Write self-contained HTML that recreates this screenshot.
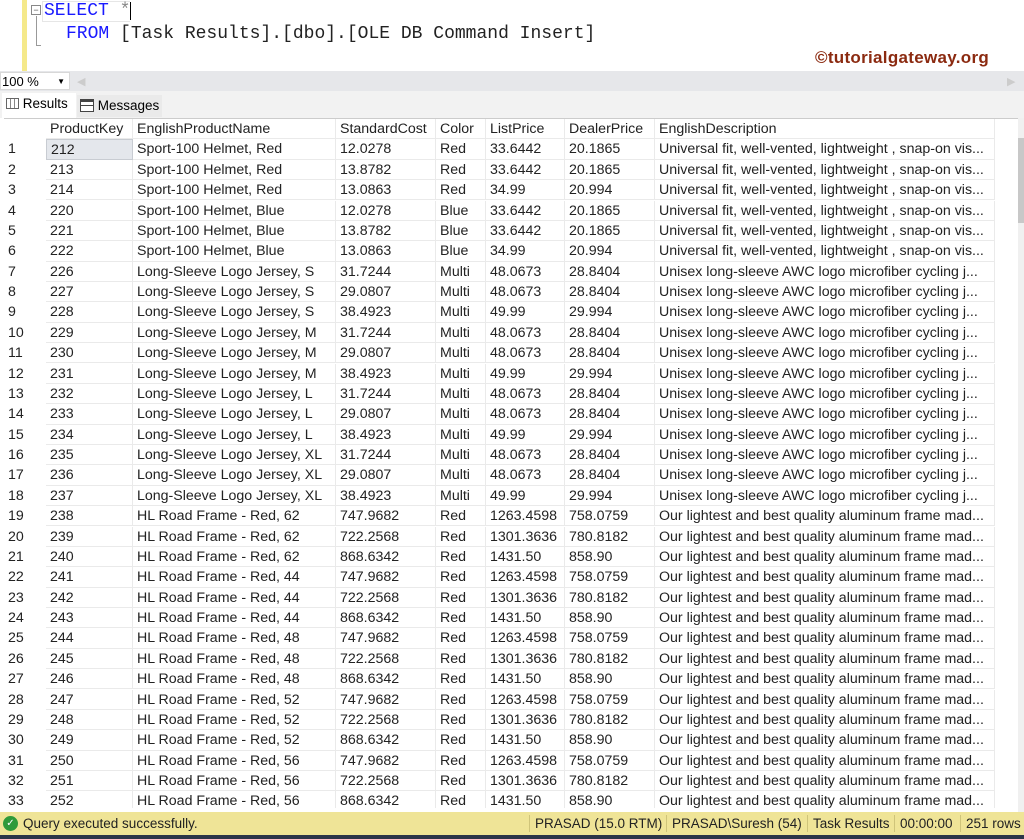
<!DOCTYPE html>
<html><head><meta charset="utf-8"><style>
*{margin:0;padding:0;box-sizing:border-box}
body{width:1024px;height:839px;overflow:hidden;background:#fff;font-family:"Liberation Sans",sans-serif;position:relative}
.ed{position:absolute;left:0;top:0;width:1024px;height:72px;background:#fff}
.ybar{position:absolute;left:22px;top:0;width:5px;height:72px;background:#f5e98a}
.code{position:absolute;font-family:"Liberation Mono",monospace;font-size:18px;color:#222;white-space:pre}
.kw{color:#1a1aff}
.zb{position:absolute;left:0;top:71px;width:1024px;height:20px;background:#e6e7ea}
.zoom{position:absolute;left:0;top:72px;width:70px;height:18px;background:#fff;border:1px solid #d8d8d8;font-size:13px;padding-left:1px;line-height:17px}
.tabs{position:absolute;left:0;top:91px;width:1024px;height:27px;background:#f2f2f2}
.tab{position:absolute;font-size:13.5px}
.grid{position:absolute;left:4px;top:118px;width:1014px;height:690px;background:#fff;overflow:hidden;border-top:1px solid #ccc}
.r{position:absolute;left:0;height:20.4px;width:1000px;font-size:14.2px;color:#222;line-height:20px}
.r span{position:absolute;top:0;height:100%;border-right:1px solid #eaeaea;border-bottom:1px solid #eaeaea;padding-left:4px;white-space:nowrap;overflow:hidden}
.r span.n{border:none;padding-left:4px}
.sb{position:absolute;left:1018px;top:118px;width:6px;height:694px;background:#f0f0f0}
.st{position:absolute;left:0;top:812px;width:1024px;height:23px;background:#efe497;font-size:13.5px;line-height:23px;color:#222}
.st i{position:absolute;top:3px;height:17px;border-left:1px solid #cfc47a;font-style:normal;padding-left:5px;line-height:17px}
.bot{position:absolute;left:0;top:835px;width:1024px;height:4px;background:#2b3548}
</style></head><body>
<div class="ed">
<div class="ybar"></div>
<div style="position:absolute;left:31px;top:5px;width:10px;height:10px;border:1px solid #888;font-size:9px;line-height:8px;text-align:center;color:#555">−</div>
<div style="position:absolute;left:36px;top:16px;width:5px;height:30px;border-left:1px solid #999;border-bottom:1px solid #999"></div>
<div style="position:absolute;left:42px;top:1px;width:88px;height:21px;border:1px solid #e6e6e6;border-right:none"></div>
<div style="position:absolute;left:130px;top:2px;width:1px;height:18px;background:#000"></div>
<div class="code" style="left:44px;top:1px"><span class="kw">SELECT</span> <span style="color:#888">*</span></div>
<div class="code" style="left:66px;top:24px"><span class="kw">FROM</span> [Task Results].[dbo].[OLE DB Command Insert]</div>
<div style="position:absolute;left:815px;top:48px;font-size:17px;letter-spacing:0.3px;font-weight:bold;color:#8b2a10">©tutorialgateway.org</div>
</div>
<div class="zb"></div>
<div class="zoom">100 %<span style="position:absolute;right:4px;top:0;font-size:8px">▼</span></div>
<div style="position:absolute;left:77px;top:75px;color:#ccc;font-size:11px">◀</div>
<div style="position:absolute;left:1007px;top:75px;color:#ccc;font-size:11px">▶</div>
<div class="tabs">
<div style="position:absolute;left:2px;top:2px;width:74px;height:25px;background:#fff"></div>
<div class="tab" style="left:6px;top:5px"><span style="display:inline-block;width:13px;height:11px;border:1px solid #666;background:repeating-linear-gradient(90deg,#fff 0 3px,#888 3px 4px);vertical-align:-1px"></span> Results</div>
<div style="position:absolute;left:77px;top:4px;width:85px;height:22px;background:#eaeaea"></div>
<div class="tab" style="left:80px;top:7px"><span style="display:inline-block;width:14px;height:13px;border:1px solid #444;vertical-align:-2px;background:linear-gradient(#444 0 2px,#fff 2px 5px,#444 5px 6px,#fff 6px)"></span> Messages</div>
</div>
<div class="grid">
<div class="r" style="top:0"><span class="n" style="left:0;width:42px"></span><span style="left:42px;width:87px">ProductKey</span><span style="left:129px;width:203px">EnglishProductName</span><span style="left:332px;width:100px">StandardCost</span><span style="left:432px;width:50px">Color</span><span style="left:482px;width:79px">ListPrice</span><span style="left:561px;width:90px">DealerPrice</span><span style="left:651px;width:340px">EnglishDescription</span></div>
<div class="r" style="top:20.4px"><span class="n" style="left:0;width:42px">1</span><span style="left:42px;width:87px;background:#e4e7ec;border:1px solid #c8ccd2">212</span><span style="left:129px;width:203px">Sport-100 Helmet, Red</span><span style="left:332px;width:100px">12.0278</span><span style="left:432px;width:50px">Red</span><span style="left:482px;width:79px">33.6442</span><span style="left:561px;width:90px">20.1865</span><span style="left:651px;width:340px">Universal fit, well-vented, lightweight , snap-on vis...</span></div>
<div class="r" style="top:40.8px"><span class="n" style="left:0;width:42px">2</span><span style="left:42px;width:87px">213</span><span style="left:129px;width:203px">Sport-100 Helmet, Red</span><span style="left:332px;width:100px">13.8782</span><span style="left:432px;width:50px">Red</span><span style="left:482px;width:79px">33.6442</span><span style="left:561px;width:90px">20.1865</span><span style="left:651px;width:340px">Universal fit, well-vented, lightweight , snap-on vis...</span></div>
<div class="r" style="top:61.1px"><span class="n" style="left:0;width:42px">3</span><span style="left:42px;width:87px">214</span><span style="left:129px;width:203px">Sport-100 Helmet, Red</span><span style="left:332px;width:100px">13.0863</span><span style="left:432px;width:50px">Red</span><span style="left:482px;width:79px">34.99</span><span style="left:561px;width:90px">20.994</span><span style="left:651px;width:340px">Universal fit, well-vented, lightweight , snap-on vis...</span></div>
<div class="r" style="top:81.5px"><span class="n" style="left:0;width:42px">4</span><span style="left:42px;width:87px">220</span><span style="left:129px;width:203px">Sport-100 Helmet, Blue</span><span style="left:332px;width:100px">12.0278</span><span style="left:432px;width:50px">Blue</span><span style="left:482px;width:79px">33.6442</span><span style="left:561px;width:90px">20.1865</span><span style="left:651px;width:340px">Universal fit, well-vented, lightweight , snap-on vis...</span></div>
<div class="r" style="top:101.9px"><span class="n" style="left:0;width:42px">5</span><span style="left:42px;width:87px">221</span><span style="left:129px;width:203px">Sport-100 Helmet, Blue</span><span style="left:332px;width:100px">13.8782</span><span style="left:432px;width:50px">Blue</span><span style="left:482px;width:79px">33.6442</span><span style="left:561px;width:90px">20.1865</span><span style="left:651px;width:340px">Universal fit, well-vented, lightweight , snap-on vis...</span></div>
<div class="r" style="top:122.3px"><span class="n" style="left:0;width:42px">6</span><span style="left:42px;width:87px">222</span><span style="left:129px;width:203px">Sport-100 Helmet, Blue</span><span style="left:332px;width:100px">13.0863</span><span style="left:432px;width:50px">Blue</span><span style="left:482px;width:79px">34.99</span><span style="left:561px;width:90px">20.994</span><span style="left:651px;width:340px">Universal fit, well-vented, lightweight , snap-on vis...</span></div>
<div class="r" style="top:142.6px"><span class="n" style="left:0;width:42px">7</span><span style="left:42px;width:87px">226</span><span style="left:129px;width:203px">Long-Sleeve Logo Jersey, S</span><span style="left:332px;width:100px">31.7244</span><span style="left:432px;width:50px">Multi</span><span style="left:482px;width:79px">48.0673</span><span style="left:561px;width:90px">28.8404</span><span style="left:651px;width:340px">Unisex long-sleeve AWC logo microfiber cycling j...</span></div>
<div class="r" style="top:163px"><span class="n" style="left:0;width:42px">8</span><span style="left:42px;width:87px">227</span><span style="left:129px;width:203px">Long-Sleeve Logo Jersey, S</span><span style="left:332px;width:100px">29.0807</span><span style="left:432px;width:50px">Multi</span><span style="left:482px;width:79px">48.0673</span><span style="left:561px;width:90px">28.8404</span><span style="left:651px;width:340px">Unisex long-sleeve AWC logo microfiber cycling j...</span></div>
<div class="r" style="top:183.4px"><span class="n" style="left:0;width:42px">9</span><span style="left:42px;width:87px">228</span><span style="left:129px;width:203px">Long-Sleeve Logo Jersey, S</span><span style="left:332px;width:100px">38.4923</span><span style="left:432px;width:50px">Multi</span><span style="left:482px;width:79px">49.99</span><span style="left:561px;width:90px">29.994</span><span style="left:651px;width:340px">Unisex long-sleeve AWC logo microfiber cycling j...</span></div>
<div class="r" style="top:203.8px"><span class="n" style="left:0;width:42px">10</span><span style="left:42px;width:87px">229</span><span style="left:129px;width:203px">Long-Sleeve Logo Jersey, M</span><span style="left:332px;width:100px">31.7244</span><span style="left:432px;width:50px">Multi</span><span style="left:482px;width:79px">48.0673</span><span style="left:561px;width:90px">28.8404</span><span style="left:651px;width:340px">Unisex long-sleeve AWC logo microfiber cycling j...</span></div>
<div class="r" style="top:224.1px"><span class="n" style="left:0;width:42px">11</span><span style="left:42px;width:87px">230</span><span style="left:129px;width:203px">Long-Sleeve Logo Jersey, M</span><span style="left:332px;width:100px">29.0807</span><span style="left:432px;width:50px">Multi</span><span style="left:482px;width:79px">48.0673</span><span style="left:561px;width:90px">28.8404</span><span style="left:651px;width:340px">Unisex long-sleeve AWC logo microfiber cycling j...</span></div>
<div class="r" style="top:244.5px"><span class="n" style="left:0;width:42px">12</span><span style="left:42px;width:87px">231</span><span style="left:129px;width:203px">Long-Sleeve Logo Jersey, M</span><span style="left:332px;width:100px">38.4923</span><span style="left:432px;width:50px">Multi</span><span style="left:482px;width:79px">49.99</span><span style="left:561px;width:90px">29.994</span><span style="left:651px;width:340px">Unisex long-sleeve AWC logo microfiber cycling j...</span></div>
<div class="r" style="top:264.9px"><span class="n" style="left:0;width:42px">13</span><span style="left:42px;width:87px">232</span><span style="left:129px;width:203px">Long-Sleeve Logo Jersey, L</span><span style="left:332px;width:100px">31.7244</span><span style="left:432px;width:50px">Multi</span><span style="left:482px;width:79px">48.0673</span><span style="left:561px;width:90px">28.8404</span><span style="left:651px;width:340px">Unisex long-sleeve AWC logo microfiber cycling j...</span></div>
<div class="r" style="top:285.3px"><span class="n" style="left:0;width:42px">14</span><span style="left:42px;width:87px">233</span><span style="left:129px;width:203px">Long-Sleeve Logo Jersey, L</span><span style="left:332px;width:100px">29.0807</span><span style="left:432px;width:50px">Multi</span><span style="left:482px;width:79px">48.0673</span><span style="left:561px;width:90px">28.8404</span><span style="left:651px;width:340px">Unisex long-sleeve AWC logo microfiber cycling j...</span></div>
<div class="r" style="top:305.6px"><span class="n" style="left:0;width:42px">15</span><span style="left:42px;width:87px">234</span><span style="left:129px;width:203px">Long-Sleeve Logo Jersey, L</span><span style="left:332px;width:100px">38.4923</span><span style="left:432px;width:50px">Multi</span><span style="left:482px;width:79px">49.99</span><span style="left:561px;width:90px">29.994</span><span style="left:651px;width:340px">Unisex long-sleeve AWC logo microfiber cycling j...</span></div>
<div class="r" style="top:326px"><span class="n" style="left:0;width:42px">16</span><span style="left:42px;width:87px">235</span><span style="left:129px;width:203px">Long-Sleeve Logo Jersey, XL</span><span style="left:332px;width:100px">31.7244</span><span style="left:432px;width:50px">Multi</span><span style="left:482px;width:79px">48.0673</span><span style="left:561px;width:90px">28.8404</span><span style="left:651px;width:340px">Unisex long-sleeve AWC logo microfiber cycling j...</span></div>
<div class="r" style="top:346.4px"><span class="n" style="left:0;width:42px">17</span><span style="left:42px;width:87px">236</span><span style="left:129px;width:203px">Long-Sleeve Logo Jersey, XL</span><span style="left:332px;width:100px">29.0807</span><span style="left:432px;width:50px">Multi</span><span style="left:482px;width:79px">48.0673</span><span style="left:561px;width:90px">28.8404</span><span style="left:651px;width:340px">Unisex long-sleeve AWC logo microfiber cycling j...</span></div>
<div class="r" style="top:366.8px"><span class="n" style="left:0;width:42px">18</span><span style="left:42px;width:87px">237</span><span style="left:129px;width:203px">Long-Sleeve Logo Jersey, XL</span><span style="left:332px;width:100px">38.4923</span><span style="left:432px;width:50px">Multi</span><span style="left:482px;width:79px">49.99</span><span style="left:561px;width:90px">29.994</span><span style="left:651px;width:340px">Unisex long-sleeve AWC logo microfiber cycling j...</span></div>
<div class="r" style="top:387.1px"><span class="n" style="left:0;width:42px">19</span><span style="left:42px;width:87px">238</span><span style="left:129px;width:203px">HL Road Frame - Red, 62</span><span style="left:332px;width:100px">747.9682</span><span style="left:432px;width:50px">Red</span><span style="left:482px;width:79px">1263.4598</span><span style="left:561px;width:90px">758.0759</span><span style="left:651px;width:340px">Our lightest and best quality aluminum frame mad...</span></div>
<div class="r" style="top:407.5px"><span class="n" style="left:0;width:42px">20</span><span style="left:42px;width:87px">239</span><span style="left:129px;width:203px">HL Road Frame - Red, 62</span><span style="left:332px;width:100px">722.2568</span><span style="left:432px;width:50px">Red</span><span style="left:482px;width:79px">1301.3636</span><span style="left:561px;width:90px">780.8182</span><span style="left:651px;width:340px">Our lightest and best quality aluminum frame mad...</span></div>
<div class="r" style="top:427.9px"><span class="n" style="left:0;width:42px">21</span><span style="left:42px;width:87px">240</span><span style="left:129px;width:203px">HL Road Frame - Red, 62</span><span style="left:332px;width:100px">868.6342</span><span style="left:432px;width:50px">Red</span><span style="left:482px;width:79px">1431.50</span><span style="left:561px;width:90px">858.90</span><span style="left:651px;width:340px">Our lightest and best quality aluminum frame mad...</span></div>
<div class="r" style="top:448.3px"><span class="n" style="left:0;width:42px">22</span><span style="left:42px;width:87px">241</span><span style="left:129px;width:203px">HL Road Frame - Red, 44</span><span style="left:332px;width:100px">747.9682</span><span style="left:432px;width:50px">Red</span><span style="left:482px;width:79px">1263.4598</span><span style="left:561px;width:90px">758.0759</span><span style="left:651px;width:340px">Our lightest and best quality aluminum frame mad...</span></div>
<div class="r" style="top:468.6px"><span class="n" style="left:0;width:42px">23</span><span style="left:42px;width:87px">242</span><span style="left:129px;width:203px">HL Road Frame - Red, 44</span><span style="left:332px;width:100px">722.2568</span><span style="left:432px;width:50px">Red</span><span style="left:482px;width:79px">1301.3636</span><span style="left:561px;width:90px">780.8182</span><span style="left:651px;width:340px">Our lightest and best quality aluminum frame mad...</span></div>
<div class="r" style="top:489px"><span class="n" style="left:0;width:42px">24</span><span style="left:42px;width:87px">243</span><span style="left:129px;width:203px">HL Road Frame - Red, 44</span><span style="left:332px;width:100px">868.6342</span><span style="left:432px;width:50px">Red</span><span style="left:482px;width:79px">1431.50</span><span style="left:561px;width:90px">858.90</span><span style="left:651px;width:340px">Our lightest and best quality aluminum frame mad...</span></div>
<div class="r" style="top:509.4px"><span class="n" style="left:0;width:42px">25</span><span style="left:42px;width:87px">244</span><span style="left:129px;width:203px">HL Road Frame - Red, 48</span><span style="left:332px;width:100px">747.9682</span><span style="left:432px;width:50px">Red</span><span style="left:482px;width:79px">1263.4598</span><span style="left:561px;width:90px">758.0759</span><span style="left:651px;width:340px">Our lightest and best quality aluminum frame mad...</span></div>
<div class="r" style="top:529.8px"><span class="n" style="left:0;width:42px">26</span><span style="left:42px;width:87px">245</span><span style="left:129px;width:203px">HL Road Frame - Red, 48</span><span style="left:332px;width:100px">722.2568</span><span style="left:432px;width:50px">Red</span><span style="left:482px;width:79px">1301.3636</span><span style="left:561px;width:90px">780.8182</span><span style="left:651px;width:340px">Our lightest and best quality aluminum frame mad...</span></div>
<div class="r" style="top:550.1px"><span class="n" style="left:0;width:42px">27</span><span style="left:42px;width:87px">246</span><span style="left:129px;width:203px">HL Road Frame - Red, 48</span><span style="left:332px;width:100px">868.6342</span><span style="left:432px;width:50px">Red</span><span style="left:482px;width:79px">1431.50</span><span style="left:561px;width:90px">858.90</span><span style="left:651px;width:340px">Our lightest and best quality aluminum frame mad...</span></div>
<div class="r" style="top:570.5px"><span class="n" style="left:0;width:42px">28</span><span style="left:42px;width:87px">247</span><span style="left:129px;width:203px">HL Road Frame - Red, 52</span><span style="left:332px;width:100px">747.9682</span><span style="left:432px;width:50px">Red</span><span style="left:482px;width:79px">1263.4598</span><span style="left:561px;width:90px">758.0759</span><span style="left:651px;width:340px">Our lightest and best quality aluminum frame mad...</span></div>
<div class="r" style="top:590.9px"><span class="n" style="left:0;width:42px">29</span><span style="left:42px;width:87px">248</span><span style="left:129px;width:203px">HL Road Frame - Red, 52</span><span style="left:332px;width:100px">722.2568</span><span style="left:432px;width:50px">Red</span><span style="left:482px;width:79px">1301.3636</span><span style="left:561px;width:90px">780.8182</span><span style="left:651px;width:340px">Our lightest and best quality aluminum frame mad...</span></div>
<div class="r" style="top:611.3px"><span class="n" style="left:0;width:42px">30</span><span style="left:42px;width:87px">249</span><span style="left:129px;width:203px">HL Road Frame - Red, 52</span><span style="left:332px;width:100px">868.6342</span><span style="left:432px;width:50px">Red</span><span style="left:482px;width:79px">1431.50</span><span style="left:561px;width:90px">858.90</span><span style="left:651px;width:340px">Our lightest and best quality aluminum frame mad...</span></div>
<div class="r" style="top:631.6px"><span class="n" style="left:0;width:42px">31</span><span style="left:42px;width:87px">250</span><span style="left:129px;width:203px">HL Road Frame - Red, 56</span><span style="left:332px;width:100px">747.9682</span><span style="left:432px;width:50px">Red</span><span style="left:482px;width:79px">1263.4598</span><span style="left:561px;width:90px">758.0759</span><span style="left:651px;width:340px">Our lightest and best quality aluminum frame mad...</span></div>
<div class="r" style="top:652px"><span class="n" style="left:0;width:42px">32</span><span style="left:42px;width:87px">251</span><span style="left:129px;width:203px">HL Road Frame - Red, 56</span><span style="left:332px;width:100px">722.2568</span><span style="left:432px;width:50px">Red</span><span style="left:482px;width:79px">1301.3636</span><span style="left:561px;width:90px">780.8182</span><span style="left:651px;width:340px">Our lightest and best quality aluminum frame mad...</span></div>
<div class="r" style="top:672.4px"><span class="n" style="left:0;width:42px">33</span><span style="left:42px;width:87px">252</span><span style="left:129px;width:203px">HL Road Frame - Red, 56</span><span style="left:332px;width:100px">868.6342</span><span style="left:432px;width:50px">Red</span><span style="left:482px;width:79px">1431.50</span><span style="left:561px;width:90px">858.90</span><span style="left:651px;width:340px">Our lightest and best quality aluminum frame mad...</span></div>
</div>
<div class="sb"><div style="position:absolute;left:0;top:20px;width:6px;height:85px;background:#c8c8c8"></div></div>
<div class="st">
<div style="position:absolute;left:3px;top:4px;width:15px;height:15px;border-radius:50%;background:#2f9a3a;color:#fff;font-size:10px;line-height:15px;text-align:center">✓</div>
<span style="position:absolute;left:23px">Query executed successfully.</span>
<i style="left:529px">PRASAD (15.0 RTM)</i>
<i style="left:666px">PRASAD\Suresh (54)</i>
<i style="left:807px">Task Results</i>
<i style="left:894px">00:00:00</i>
<i style="left:960px">251 rows</i>
</div>
<div class="bot"></div>
</body></html>
